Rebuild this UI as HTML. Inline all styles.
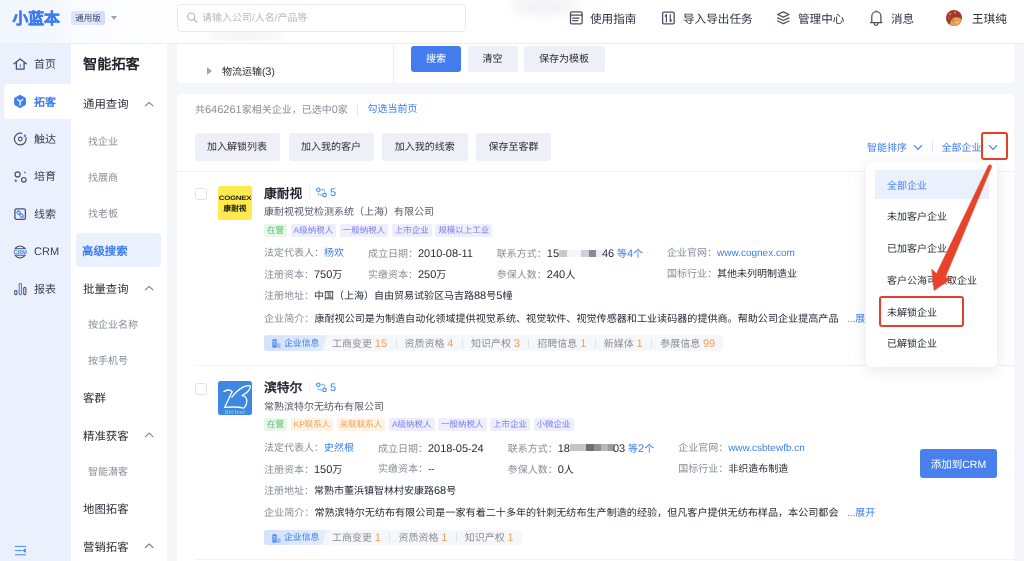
<!DOCTYPE html>
<html lang="zh-CN"><head><meta charset="utf-8">
<style>
*{margin:0;padding:0;box-sizing:border-box}
html,body{-webkit-font-smoothing:antialiased;text-rendering:geometricPrecision;width:1024px;height:561px;overflow:hidden;background:#f5f6fa;font-family:"Liberation Sans",sans-serif;color:#2b2f38}
.a{position:absolute;white-space:nowrap}
#hdr{position:absolute;left:0;top:0;width:1024px;height:44px;background:linear-gradient(90deg,#f2f6fe 0,#f5f8fe 62px,#fbfcff 78px,#fefeff 170px,#fff 260px);border-bottom:1px solid #eceef3}
#s1{position:absolute;left:0;top:44px;width:71px;height:517px;background:#ebf1fc}
#s2{position:absolute;left:71px;top:44px;width:96px;height:517px;background:#fff}
.card{position:absolute;background:#fff;border-radius:4px}
.t10{font-size:10px;line-height:14px}
.nav{font-size:11.6px;line-height:19px;color:#2e3440}
.s1t{font-size:11px;line-height:18px;color:#3a4050}
.s2h{font-size:11.4px;line-height:16px;color:#2b2f38;font-weight:500}
.s2i{font-size:10px;line-height:14px;color:#8a8e98}
.btn{position:absolute;background:#efeff7;border-radius:3px;font-size:10px;color:#2b2f38;text-align:center;white-space:nowrap;padding-top:1.5px}

.lbl{font-size:10px;line-height:14px;color:#8a8e98}
.blue{color:#3d7ef0}
.lb{color:#8a8e98}
.nm{font-size:12.8px;line-height:18px;font-weight:600;color:#23272f}
.sub{font-size:10px;line-height:14px;color:#555a66;padding-top:2px}
.tags{display:flex;gap:3.5px}
.tg{display:inline-block;height:13px;line-height:13px;padding:0 3px;font-size:8.5px;border-radius:2px}
.tg.g{background:#e7f6ea;color:#5bbd6c}
.tg.o{background:#fff3e5;color:#f0a055}
.tg.p{background:#eeeefd;color:#7d80ee}
.grid{display:grid;grid-template-columns:auto auto auto auto;column-gap:24px;row-gap:6px;font-size:10px;line-height:14px;color:#2b2f38}
.tabs{height:15.7px;background:#f6f7fa;border-radius:3px;font-size:10px;line-height:15.7px;color:#8a8e98;display:flex;align-items:center;padding-right:8px}
.tb{padding:0;position:relative;top:1.8px}
.tb.act{top:0;padding-top:1.5px!important;display:flex;align-items:center;height:15.7px;width:63px;font-size:8.9px;font-weight:500;background:linear-gradient(90deg,#d3e1fb,#e4edfd);color:#3d7ef0;padding:0 0 0 8px;clip-path:polygon(0 0,100% 0,calc(100% - 5px) 100%,0 100%);border-radius:3px 0 0 3px;margin-right:5px}
.tb b{font-weight:normal;color:#f0a055}
.sp{display:inline-block;width:1px;height:9px;background:#e1e3e8;margin:0 8px 0 8.5px}
.cb{width:12px;height:12px;border:1px solid #dfe2e8;border-radius:2.5px;background:#fff}
.blur{display:inline-block;height:9px;vertical-align:-1px;background:linear-gradient(90deg,#e6e6ea 0,#f1f1f4 30%,#e2e2e8 55%,#8f9097 70%,#c8c9ce 85%,#fff 100%);margin:0 1px}
.dd{font-size:10px;line-height:14px;color:#2b2f38}
.n{font-size:1.1em}
.mz{display:inline-block;height:7px;vertical-align:-1.5px;margin:0 -1px 0 0}.mz i{display:inline-block;height:7px;vertical-align:top}
.grid,.val{font-weight:500;color:#282c38}
.lb{font-weight:400}
.dd{font-weight:500}
</style></head><body><div id="root" style="position:absolute;left:0;top:0;width:1024px;height:561px;will-change:transform">

<div id="hdr">
  <div class="a" style="left:12.5px;top:10px;font-size:15.8px;line-height:20px;font-weight:900;color:#3b7cf0;-webkit-text-stroke:0.5px #3b7cf0">小蓝本</div>
  <div class="a" style="left:71px;top:11px;width:34px;height:14px;background:linear-gradient(90deg,#dbe5fa,#e4ecfc 55%,#d0dcf8);border-radius:3px;font-size:8.5px;line-height:14px;text-align:center;color:#3a4668;font-weight:500">通用版</div>
  <div class="a" style="left:111px;top:16px;width:0;height:0;border-left:3.5px solid transparent;border-right:3.5px solid transparent;border-top:4px solid #9aa3b5"></div>
  <div class="a" style="left:510px;top:-3px;width:70px;height:18px;border-radius:50%;background:rgba(110,115,130,0.09);filter:blur(6px)"></div>
  <div class="a" style="left:205px;top:31px;width:80px;height:8px;border-radius:50%;background:rgba(110,115,130,0.10);filter:blur(4px)"></div>
  <div class="a" style="left:177px;top:4px;width:289px;height:28px;background:#fff;border:1px solid #e5e8ee;border-radius:4px"></div>
  <div class="a" style="left:202px;top:11.5px;font-size:10px;line-height:14px;color:#b6bac3">请输入公司/人名/产品等</div>
  <div class="a nav" style="left:590px;top:10px">使用指南</div>
  <div class="a nav" style="left:683px;top:10px">导入导出任务</div>
  <div class="a nav" style="left:798px;top:10px">管理中心</div>
  <div class="a nav" style="left:891px;top:10px">消息</div>
  <svg class="a" style="left:946px;top:10px" width="16" height="16" viewBox="0 0 16 16"><defs><clipPath id="av"><circle cx="8" cy="8" r="8"/></clipPath></defs>
<g clip-path="url(#av)"><rect width="16" height="16" fill="#a2392c"/>
<circle cx="4" cy="4" r="1.3" fill="#d9843f" opacity="0.8"/><circle cx="9" cy="2.5" r="1" fill="#e9b070" opacity="0.8"/><circle cx="3" cy="8" r="0.9" fill="#d47a3a" opacity="0.7"/>
<path d="M4 16 C4 11 6 8 9 7.5 C12 7 15 8 16 10 V16 Z" fill="#e6a255"/>
<path d="M9.5 11.5 C10.5 12.8 12 12.8 12.8 11.6 C12.5 13.5 10.5 14 9.5 11.5Z" fill="#f4f0ea"/>
<path d="M6.5 9.5 C7.5 9 8 10.5 7.5 12 C6.8 11 6.4 10.2 6.5 9.5Z" fill="#7a2a1e" opacity="0.7"/>
</g></svg>
  <div class="a nav" style="left:972px;top:10px">王琪纯</div>
</div>

<div id="s1">
  <div class="a" style="left:4px;top:40px;width:67px;height:35px;background:#fff;border-radius:4px 0 0 4px"></div>
  <div class="a s1t" style="left:34px;top:12px">首页</div>
  <div class="a s1t" style="left:34px;top:49.5px;color:#3d7ef0;font-weight:600">拓客</div>
  <div class="a s1t" style="left:34px;top:87px">触达</div>
  <div class="a s1t" style="left:34px;top:124px">培育</div>
  <div class="a s1t" style="left:34px;top:161.5px">线索</div>
  <div class="a s1t" style="left:34px;top:199px">CRM</div>
  <div class="a s1t" style="left:34px;top:237px">报表</div>
</div>

<div id="s2">
  <div class="a" style="left:12px;top:12px;font-size:14.2px;line-height:18px;font-weight:bold;color:#23272f">智能拓客</div>
  <div class="a s2h" style="left:12px;top:53px">通用查询</div>
  <div class="a s2i" style="left:17px;top:91.9px">找企业</div>
  <div class="a s2i" style="left:17px;top:128px">找展商</div>
  <div class="a s2i" style="left:17px;top:164.1px">找老板</div>
  <div class="a" style="left:5px;top:189px;width:85px;height:34px;background:#ebf1fc;border-radius:4px"></div>
  <div class="a s2h" style="left:11px;top:199.5px;color:#3d7ef0;font-weight:600">高级搜索</div>
  <div class="a s2h" style="left:12px;top:237.5px">批量查询</div>
  <div class="a s2i" style="left:17px;top:274.5px">按企业名称</div>
  <div class="a s2i" style="left:17px;top:310.5px">按手机号</div>
  <div class="a s2h" style="left:12px;top:346.5px">客群</div>
  <div class="a s2h" style="left:12px;top:384.5px">精准获客</div>
  <div class="a s2i" style="left:17px;top:421.5px">智能潜客</div>
  <div class="a s2h" style="left:12px;top:457.5px">地图拓客</div>
  <div class="a s2h" style="left:12px;top:495.5px">营销拓客</div>
</div>

<div class="card" style="left:177px;top:44px;width:837px;height:39px;border-radius:0 0 4px 4px">
  <div class="a" style="left:30px;top:23px;width:0;height:0;border-top:4px solid transparent;border-bottom:4px solid transparent;border-left:5px solid #a0a6b4"></div>
  <div class="a" style="left:45px;top:21px;font-size:10px;line-height:14px;color:#23272f;font-weight:500">物流运输(<span class="n">3</span>)</div>
  <div class="a" style="left:216px;top:0;width:1px;height:39px;background:#eceef3"></div>
  <div class="btn" style="left:234px;top:1.5px;width:50px;height:26px;line-height:26px;background:#437ded;color:#fff">搜索</div>
  <div class="btn" style="left:290.5px;top:1.5px;width:50px;height:26px;line-height:26px">清空</div>
  <div class="btn" style="left:346.5px;top:1.5px;width:81px;height:26px;line-height:26px">保存为模板</div>
</div>


<div class="card" style="left:177px;top:94px;width:837px;height:480px"></div>
<div class="a lbl" style="left:195px;top:102.7px">共<span class="n">646261</span>家相关企业，已选中<span class="n">0</span>家</div>
<div class="a" style="left:357px;top:103.5px;width:1px;height:12px;background:#e3e5ea"></div>
<div class="a blue t10" style="left:367.5px;top:102.7px">勾选当前页</div>
<div class="btn" style="left:194.5px;top:132.5px;width:85px;height:28.5px;line-height:28.5px">加入解锁列表</div>
<div class="btn" style="left:288.5px;top:132.5px;width:85px;height:28.5px;line-height:28.5px">加入我的客户</div>
<div class="btn" style="left:382px;top:132.5px;width:85.5px;height:28.5px;line-height:28.5px">加入我的线索</div>
<div class="btn" style="left:476px;top:132.5px;width:75px;height:28.5px;line-height:28.5px">保存至客群</div>
<div class="a blue t10" style="left:867px;top:141.5px">智能排序</div>
<svg class="a" style="left:913px;top:144px" width="10" height="7" viewBox="0 0 10 7"><path d="M1 1.2 L5 5.4 L9 1.2" fill="none" stroke="#3d7ef0" stroke-width="1.1"/></svg>
<div class="a" style="left:932px;top:141px;width:1px;height:12px;background:#e3e5ea"></div>
<div class="a blue t10" style="left:941.5px;top:141.5px">全部企业</div>
<svg class="a" style="left:987.5px;top:144px" width="10" height="7" viewBox="0 0 10 7"><path d="M1 1.2 L5 5.4 L9 1.2" fill="none" stroke="#3d7ef0" stroke-width="1.1"/></svg>
<div class="a" style="left:177px;top:171px;width:837px;height:1px;background:#f1f2f6"></div>

<div class="a co" style="left:0;top:171px;width:1024px;height:195px">
  <div class="a cb" style="left:194.5px;top:17px"></div>
  <div class="a" style="left:218px;top:15px;width:34px;height:34px"><div style="width:34px;height:34px;background:#fdea4d;border-radius:2.5px;position:relative;overflow:hidden">
<div class="a" style="left:0;top:8.5px;width:34px;text-align:center;font-size:6.3px;line-height:7px;font-weight:bold;color:#1a1a10;letter-spacing:-0.2px;transform:scaleX(1.25)">COGNEX</div>
<div class="a" style="left:0;top:17.5px;width:34px;text-align:center;font-size:7.6px;line-height:9px;font-weight:bold;color:#1a1a10">康耐视</div></div></div>
  <div class="a nm" style="left:264px;top:13.5px">康耐视</div>
  <div class="a" style="left:308.5px;top:15px;width:1px;height:13px;background:#eceef3"></div>
  <svg class="a" style="left:315.5px;top:15px" width="11" height="12" viewBox="0 0 11 12">
    <circle cx="2.3" cy="3.7" r="1.75" fill="none" stroke="#4f86f0" stroke-width="1.15"/>
    <circle cx="8.5" cy="8.9" r="1.75" fill="none" stroke="#4f86f0" stroke-width="1.15"/>
    <path d="M5.4 3.7 H8.6 V5.9 M6.5 2.7 L5.4 3.7 L6.5 4.7" fill="none" stroke="#72c2f5" stroke-width="1"/>
    <path d="M5.6 8.9 H2.3 V6.6 M4.5 7.9 L5.6 8.9 L4.5 9.9" fill="none" stroke="#72c2f5" stroke-width="1"/>
  </svg>
  <div class="a blue t10" style="left:330px;top:15px"><span class="n">5</span></div>
  <div class="a sub" style="left:264px;top:33px">康耐视视觉检测系统（上海）有限公司</div>
  <div class="a tags" style="left:264px;top:52.5px"><span class="tg g">在营</span><span class="tg p">A级纳税人</span><span class="tg p">一般纳税人</span><span class="tg p">上市企业</span><span class="tg p">规模以上工业</span></div>
  <div class="a grid" style="left:264px;top:76px"><div><span class="lb">法定代表人：</span><span class="blue">杨欢</span></div><div><span class="lb">成立日期：</span><span class="n">2010</span>-<span class="n">08</span>-<span class="n">11</span></div><div><span class="lb">联系方式：</span><span class="n">15</span><span class="mz"><i style="width:8.3px;background:#cacace"></i><i style="width:7px;background:#f4f4f6"></i><i style="width:7px;background:#f7f7f9"></i><i style="width:7.5px;background:#d0d0db"></i><i style="width:7px;background:#8a8a90"></i><i style="width:7px;background:#eceef8"></i></span><span class="n">46</span> <span class="blue">等<span class="n">4</span>个</span></div><div><span class="lb">企业官网：</span><span class="blue">www.cognex.com</span></div><div><span class="lb">注册资本：</span><span class="n">750</span>万</div><div><span class="lb">实缴资本：</span><span class="n">250</span>万</div><div><span class="lb">参保人数：</span><span class="n">240</span>人</div><div><span class="lb">国标行业：</span>其他未列明制造业</div></div>
  <div class="a t10 val" style="left:264px;top:118.2px"><span class="lb">注册地址：</span>中国（上海）自由贸易试验区马吉路<span class="n">88</span>号<span class="n">5</span>幢</div>
  <div class="a t10 val" style="left:264px;top:141.5px;font-size:10.09px"><span class="lb">企业简介：</span>康耐视公司是为制造自动化领域提供视觉系统、视觉软件、视觉传感器和工业读码器的提供商。帮助公司企业提高产品</div>
  <div class="a tabs" style="left:264px;top:164.2px"><span class="tb act"><svg width="9" height="9" viewBox="0 0 9 9" style="margin-right:3px;flex:none"><rect x="0.3" y="0.3" width="4.4" height="8.4" rx="0.6" fill="#5a90f2"/><rect x="1.4" y="2" width="2" height="1.4" fill="#c9dbfb"/><rect x="1.4" y="4.6" width="2" height="1" fill="#c9dbfb"/><rect x="4.7" y="4.3" width="3.9" height="4.4" rx="0.4" fill="#9dbdf7"/></svg>企业信息</span><span class="tb">工商变更 <b><span class="n">15</span></b></span><i class="sp"></i><span class="tb">资质资格 <b><span class="n">4</span></b></span><i class="sp"></i><span class="tb">知识产权 <b><span class="n">3</span></b></span><i class="sp"></i><span class="tb">招聘信息 <b><span class="n">1</span></b></span><i class="sp"></i><span class="tb">新媒体 <b><span class="n">1</span></b></span><i class="sp"></i><span class="tb">参展信息 <b><span class="n">99</span></b></span></div>
  <div class="a blue t10" style="left:847px;top:141.5px">...展开</div>
</div>
<div class="a co" style="left:0;top:365.5px;width:1024px;height:195px">
  <div class="a cb" style="left:194.5px;top:17px"></div>
  <div class="a" style="left:218px;top:15px;width:34px;height:34px"><div style="width:34px;height:34px;background:#3d88e0;border-radius:2.5px;position:relative;overflow:hidden">
<svg class="a" style="left:0;top:0" width="34" height="34" viewBox="0 0 34 34">
<path d="M5.5 10.8 C8 9 11.5 8.2 14.2 10.6 L6.6 26.4 C13 25.8 20 25.6 26.2 27.2" fill="none" stroke="#fff" stroke-width="1.3"/>
<path d="M13.5 16.5 C18 10 26 4 32 4.8 C33.5 8 28 13 23.8 14.6 C30 15 30 22 26.2 27" fill="none" stroke="#fff" stroke-width="1.3"/>
</svg>
<div class="a" style="left:0;top:29.5px;width:34px;text-align:center;font-size:6px;line-height:6px;color:#a9cbf3">BinTeer</div></div></div>
  <div class="a nm" style="left:264px;top:13.5px">滨特尔</div>
  <div class="a" style="left:308.5px;top:15px;width:1px;height:13px;background:#eceef3"></div>
  <svg class="a" style="left:315.5px;top:15px" width="11" height="12" viewBox="0 0 11 12">
    <circle cx="2.3" cy="3.7" r="1.75" fill="none" stroke="#4f86f0" stroke-width="1.15"/>
    <circle cx="8.5" cy="8.9" r="1.75" fill="none" stroke="#4f86f0" stroke-width="1.15"/>
    <path d="M5.4 3.7 H8.6 V5.9 M6.5 2.7 L5.4 3.7 L6.5 4.7" fill="none" stroke="#72c2f5" stroke-width="1"/>
    <path d="M5.6 8.9 H2.3 V6.6 M4.5 7.9 L5.6 8.9 L4.5 9.9" fill="none" stroke="#72c2f5" stroke-width="1"/>
  </svg>
  <div class="a blue t10" style="left:330px;top:15px"><span class="n">5</span></div>
  <div class="a sub" style="left:264px;top:33px">常熟滨特尔无纺布有限公司</div>
  <div class="a tags" style="left:264px;top:52.5px"><span class="tg g">在营</span><span class="tg o">KP联系人</span><span class="tg o">关联联系人</span><span class="tg p">A级纳税人</span><span class="tg p">一般纳税人</span><span class="tg p">上市企业</span><span class="tg p">小微企业</span></div>
  <div class="a grid" style="left:264px;top:76px"><div><span class="lb">法定代表人：</span><span class="blue">史然根</span></div><div><span class="lb">成立日期：</span><span class="n">2018</span>-<span class="n">05</span>-<span class="n">24</span></div><div><span class="lb">联系方式：</span><span class="n">18</span><span class="mz"><i style="width:16px;background:#c4c4ca"></i><i style="width:7.7px;background:#6e6f76"></i><i style="width:7.6px;background:#8f9096"></i><i style="width:6.4px;background:#b5b6bc"></i><i style="width:6.4px;background:#9c9da2"></i></span><span class="n">03</span> <span class="blue">等<span class="n">2</span>个</span></div><div><span class="lb">企业官网：</span><span class="blue">www.csbtewfb.cn</span></div><div><span class="lb">注册资本：</span><span class="n">150</span>万</div><div><span class="lb">实缴资本：</span>--</div><div><span class="lb">参保人数：</span><span class="n">0</span>人</div><div><span class="lb">国标行业：</span>非织造布制造</div></div>
  <div class="a t10 val" style="left:264px;top:118.2px"><span class="lb">注册地址：</span>常熟市董浜镇智林村安康路<span class="n">68</span>号</div>
  <div class="a t10 val" style="left:264px;top:141.5px;font-size:10.09px"><span class="lb">企业简介：</span>常熟滨特尔无纺布有限公司是一家有着二十多年的针刺无纺布生产制造的经验，但凡客户提供无纺布样品，本公司都会</div>
  <div class="a tabs" style="left:264px;top:164.2px"><span class="tb act"><svg width="9" height="9" viewBox="0 0 9 9" style="margin-right:3px;flex:none"><rect x="0.3" y="0.3" width="4.4" height="8.4" rx="0.6" fill="#5a90f2"/><rect x="1.4" y="2" width="2" height="1.4" fill="#c9dbfb"/><rect x="1.4" y="4.6" width="2" height="1" fill="#c9dbfb"/><rect x="4.7" y="4.3" width="3.9" height="4.4" rx="0.4" fill="#9dbdf7"/></svg>企业信息</span><span class="tb">工商变更 <b><span class="n">1</span></b></span><i class="sp"></i><span class="tb">资质资格 <b><span class="n">1</span></b></span><i class="sp"></i><span class="tb">知识产权 <b><span class="n">1</span></b></span></div>
  <div class="a blue t10" style="left:847px;top:141.5px">...展开</div><div class="btn" style="left:920px;top:83.5px;width:77px;height:28.5px;line-height:28.5px;background:#4a80ee;color:#fff;font-size:10.5px">添加到CRM</div>
</div><div class="a" style="left:195px;top:365px;width:819px;height:1px;background:#f1f2f6"></div>
<div class="a" style="left:195px;top:559px;width:819px;height:1px;background:#f1f2f6"></div>
<div class="a" style="left:866px;top:161.5px;width:131px;height:205px;background:#fff;border-radius:5px;box-shadow:0 3px 16px rgba(30,40,80,0.11)"></div>
<div class="a" style="left:875px;top:170px;width:114px;height:29px;background:#ebf1fc"></div>
<div class="a dd" style="color:#4a86f0;left:887px;top:179.5px">全部企业</div>
<div class="a dd" style="left:887px;top:211px">未加客户企业</div>
<div class="a dd" style="left:887px;top:243px">已加客户企业</div>
<div class="a dd" style="left:887px;top:274.5px">客户公海可领取企业</div>
<div class="a dd" style="left:887px;top:306.5px">未解锁企业</div>
<div class="a dd" style="left:887px;top:338px">已解锁企业</div>
<div class="a" style="left:878.5px;top:295.5px;width:85px;height:31px;border:2px solid #e3402c;border-radius:3px"></div>
<div class="a" style="left:981px;top:131.5px;width:26.5px;height:28px;border:2px solid #e3402c;border-radius:3px"></div>
<svg class="a" style="left:0;top:0" width="1024" height="561" viewBox="0 0 1024 561">
<path d="M988.3 165.9 A1.7 1.7 0 0 1 991.4 167.3 L945.2 277.5 L951.7 278.2 L934.1 290.6 L931.7 269.2 L936.5 273.6 Z" fill="#e8432a" stroke="#e8432a" stroke-width="0.6" stroke-linejoin="round"/>
</svg>



<svg class="a" style="left:0;top:0" width="1024" height="561" viewBox="0 0 1024 561">
<g fill="none" stroke="#4b5162" stroke-width="1.3" stroke-linecap="round" stroke-linejoin="round">
 <!-- house -->
 <path d="M14 63.7 L20.2 58.9 L26.4 63.7 M16.4 62.3 V69.2 H24.1 V62.3"/>
 <!-- touch -->
 <path d="M26.0 137.5 A5.9 5.9 0 1 1 21.8 133.3" stroke-width="1.2"/>
 <circle cx="20.3" cy="139" r="1.9" stroke-width="1.1"/>
 <!-- nurture -->
 <circle cx="17.6" cy="174.4" r="2.5" stroke-width="1.2"/>
 <circle cx="23.8" cy="179.8" r="2.3" stroke-width="1.2"/>
 <!-- clue -->
 <rect x="14.9" y="208.9" width="10.5" height="10.5" rx="1.6"/>
 <!-- crm -->
 <circle cx="20.1" cy="251.9" r="5.9" stroke-width="1.2"/>
 <!-- report -->
 <rect x="14.7" y="290.4" width="2.2" height="4.2" rx="0.8" stroke-width="1.05"/>
 <rect x="23.7" y="287.5" width="2.2" height="7.1" rx="0.8" stroke-width="1.05"/>
 <!-- header icons -->
 <rect x="570.5" y="11.9" width="11.6" height="12" rx="1.3"/>
 <path d="M570.5 15.1 H582.1"/>
 <path d="M572.6 18.1 H579.1 M572.6 20.6 H577.9" stroke-width="1.05"/>
 <rect x="662.6" y="12.2" width="11.6" height="11.7" rx="1.3"/>
 <path d="M666.4 21.7 V14.7 L665.1 16.1 M670.3 14.7 V21.6 L671.6 20.2" stroke-width="1.2"/>
 <path d="M777.6 14.5 L783.3 11.9 L789 14.5 L783.3 17.1 Z"/>
 <path d="M777.6 17.9 L783.3 20.5 L789 17.9 M777.6 21 L783.3 23.6 L789 21"/>
 <path d="M871.8 22.4 V16.2 A4.55 4.55 0 0 1 880.9 16.2 V22.4 M870.4 22.6 H882 M874.3 23.6 A1.8 1.8 0 0 0 877.9 23.6 M876.1 10.9 V11.6" stroke-width="1.25"/>
 <!-- carets -->
 <path d="M145.4 105.8 L149.2 102.3 L152.9 105.8 M145.4 289.9 L149.2 286.4 L152.9 289.9 M145.4 436.6 L149.2 433.1 L152.9 436.6 M145.4 547.5 L149.2 544 L152.9 547.5" stroke="#7a8094" stroke-width="1.15"/>
</g>
<g fill="none" stroke="#a9aebb" stroke-width="1.05" stroke-linecap="round"><circle cx="191.2" cy="16.6" r="3.6"/><path d="M193.9 19.4 L197 22.4"/></g>
<path d="M20.3 64.6 V67" stroke="#3d7ef0" stroke-width="1" stroke-linecap="round"/>
<path d="M20.1 95.2 L25.5 98.3 V104.6 L20.1 107.7 L14.7 104.6 V98.3 Z" fill="#3d7ef0" stroke="#3d7ef0" stroke-width="0.9" stroke-linejoin="round"/>
<path d="M17.5 99.4 L20.1 101.5 L22.7 99.4 M20.1 101.5 V105" stroke="#fff" stroke-width="1.3" fill="none" stroke-linecap="round"/>
<circle cx="24.8" cy="135.8" r="1.25" fill="#3d7ef0"/>
<circle cx="15.7" cy="180.8" r="1.25" fill="#3d7ef0"/>
<circle cx="24.9" cy="172.5" r="0.9" fill="#3d7ef0"/>
<g fill="none" stroke="#3d7ef0" stroke-width="1.1"><ellipse cx="18.7" cy="212.7" rx="2" ry="1.35" transform="rotate(45 18.7 212.7)"/><ellipse cx="21.6" cy="215.6" rx="2" ry="1.35" transform="rotate(45 21.6 215.6)"/></g>
<rect x="13" y="249.2" width="14.4" height="5.5" fill="#ebf1fc"/><path d="M15 248.7 H25.2 M15 255.2 H25.2" stroke="#4b5162" stroke-width="1"/>
<text x="20.2" y="254.2" font-size="5.6" font-weight="bold" fill="#3d7ef0" text-anchor="middle" font-family="Liberation Sans" textLength="13.6" lengthAdjust="spacingAndGlyphs">CRM</text>
<rect x="19.2" y="283.5" width="2.3" height="11.1" rx="0.9" fill="none" stroke="#3d7ef0" stroke-width="1.05"/>
<g stroke="#4a86f0" stroke-width="1" stroke-linecap="round"><path d="M15.3 546.4 H25.5 M15.3 550.6 H21.5 M15.3 554.8 H25.5"/></g>
<path d="M25.8 548.3 L22.3 550.6 L25.8 552.9 Z" fill="#4a86f0"/>
</svg>
</div></body></html>
